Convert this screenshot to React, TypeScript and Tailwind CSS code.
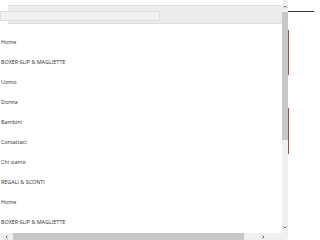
import React from 'react';

const items = [
  'Home',
  'BOXER SLIP & MAGLIETTE',
  'Uomo',
  'Donna',
  'Bambini',
  'Contattaci',
  'Chi siamo',
  'REGALI & SCONTI',
  'Home',
  'BOXER SLIP & MAGLIETTE',
];

export default function App() {
  return (
    <div className="w-[320px] h-[240px] bg-white flex overflow-hidden" style={{ fontFamily: '"Open Sans", "Liberation Sans", sans-serif' }}>
      {/* Scroll frame */}
      <div className="w-[288px] h-[240px] flex flex-col shrink-0">
        <div className="flex h-[233px] shrink-0">
          {/* Content */}
          <div className="w-[282px] h-[233px] flex flex-col overflow-hidden">
            {/* Header band */}
            <div className="h-[5px] shrink-0" />
            <div className="relative h-[19px] shrink-0 ml-[8px] bg-[#ececec] border-y border-[#dedede]">
              <div className="absolute left-[-8px] top-[5px] w-[160px] h-[10px] bg-[#f1f1f3] border border-[#dcdcdc]" />
            </div>
            {/* Menu items */}
            <div className="flex flex-col pt-[15px] shrink-0">
              {items.map((label, i) => (
                <div key={i} className="h-[20px] shrink-0 flex items-start text-[5.4px] leading-[7px] text-[#2e2e2e] pl-[1px]">
                  {label}
                </div>
              ))}
            </div>
          </div>
          {/* Vertical scrollbar */}
          <div className="w-[6px] h-[233px] bg-[#f0f0f0] flex flex-col items-center">
            <div className="h-[12px] shrink-0 flex items-center justify-center">
              <svg width="4" height="3" viewBox="0 0 4 3"><path d="M0.5 2.5 L2 1 L3.5 2.5" stroke="#606060" strokeWidth="0.9" fill="none" /></svg>
            </div>
            <div className="w-[6px] h-[128px] shrink-0 bg-[#c8c8c8]" />
            <div className="flex-1" />
            <div className="h-[12px] shrink-0 flex items-center justify-center">
              <svg width="4" height="3" viewBox="0 0 4 3"><path d="M0.5 0.5 L2 2 L3.5 0.5" stroke="#606060" strokeWidth="0.9" fill="none" /></svg>
            </div>
          </div>
        </div>
        {/* Horizontal scrollbar */}
        <div className="h-[7px] flex shrink-0">
          <div className="w-[282px] h-[7px] bg-[#f0f0f0] flex items-center">
            <div className="w-[13px] flex justify-center">
              <svg width="3" height="4" viewBox="0 0 3 4"><path d="M2.5 0.5 L1 2 L2.5 3.5" stroke="#606060" strokeWidth="0.9" fill="none" /></svg>
            </div>
            <div className="w-[231px] h-[7px] bg-[#c8c8c8]" />
            <div className="flex-1 flex justify-center">
              <svg width="3" height="4" viewBox="0 0 3 4"><path d="M0.5 0.5 L2 2 L0.5 3.5" stroke="#606060" strokeWidth="0.9" fill="none" /></svg>
            </div>
          </div>
          <div className="w-[6px] h-[7px] bg-[#f0f0f0]" />
        </div>
      </div>
      {/* Side area */}
      <div className="flex-1 relative">
        <div className="absolute left-0 top-[11px] w-[26px] h-[1px] bg-[#333333]" />
        <div className="absolute left-0 top-[30px] w-[1px] h-[45px] bg-[#b04a4a]" />
        <div className="absolute left-0 top-[108px] w-[1px] h-[46px] bg-[#b04a4a]" />
      </div>
    </div>
  );
}
